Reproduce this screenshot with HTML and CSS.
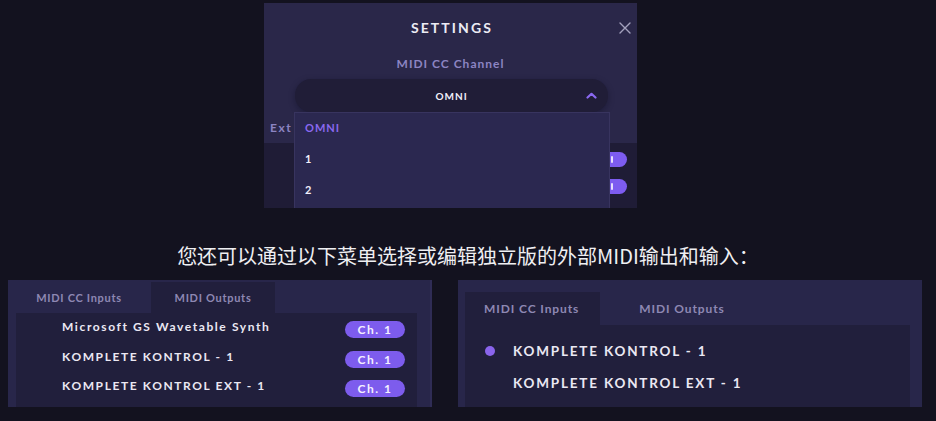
FILE: index.html
```html
<!DOCTYPE html>
<html lang="zh-CN">
<head>
<meta charset="utf-8">
<title>Settings</title>
<link rel="stylesheet" href="styles.css">
</head>
<body>
<div class="top">
  <section class="settings">
    <header class="settings-head">
      <h1 class="settings-title">SETTINGS</h1>
      <button class="close" aria-label="Close">
        <svg width="12" height="12" viewBox="0 0 12 12"><path d="M1 1 L11 11 M11 1 L1 11" stroke="#a4a1bd" stroke-width="1.4" stroke-linecap="round" fill="none"/></svg>
      </button>
    </header>
    <div class="field-label">MIDI CC Channel</div>
    <div class="select-wrap">
      <div class="select">
        <span class="select-value">OMNI</span>
        <svg class="chevron" width="11" height="7" viewBox="0 0 11 7"><path d="M1.5 5.5 L5.5 1.8 L9.5 5.5" stroke="#8a68f0" stroke-width="2.2" stroke-linecap="round" stroke-linejoin="round" fill="none"/></svg>
      </div>
      <ul class="menu">
        <li class="menu-item active">OMNI</li>
        <li class="menu-item">1</li>
        <li class="menu-item">2</li>
      </ul>
    </div>
    <div class="ext-label"><span class="ext-clip">Ext</span></div>
    <div class="ext-section">
      <div class="toggle-row"><span class="toggle"></span></div>
      <div class="toggle-row"><span class="toggle"></span></div>
    </div>
  </section>
</div>

<p class="caption">您还可以通过以下菜单选择或编辑独立版的外部MIDI输出和输入：</p>

<div class="panels">
  <section class="panel panel-out">
    <nav class="tabs">
      <span class="tab">MIDI CC Inputs</span>
      <span class="tab active">MIDI Outputs</span>
    </nav>
    <div class="list">
      <div class="row"><span class="name">Microsoft GS Wavetable Synth</span><span class="ch">Ch. 1</span></div>
      <div class="row"><span class="name">KOMPLETE KONTROL - 1</span><span class="ch">Ch. 1</span></div>
      <div class="row"><span class="name">KOMPLETE KONTROL EXT - 1</span><span class="ch">Ch. 1</span></div>
    </div>
  </section>
  <section class="panel panel-in">
    <nav class="tabs">
      <span class="tab active">MIDI CC Inputs</span>
      <span class="tab">MIDI Outputs</span>
    </nav>
    <div class="list">
      <div class="row"><span class="dot"></span><span class="name">KOMPLETE KONTROL - 1</span></div>
      <div class="row"><span class="dot off"></span><span class="name">KOMPLETE KONTROL EXT - 1</span></div>
    </div>
  </section>
</div>
</body>
</html>
```

FILE: styles.css
```css
* { box-sizing: border-box; }
html, body { margin: 0; padding: 0; }
body {
  width: 936px;
  height: 421px;
  overflow: hidden;
  background: #13121f;
  font-family: "Lato", "Noto Sans", sans-serif;
  color: #e9e6f3;
}

/* ---------- settings ---------- */
.top { padding: 3px 0 0 264px; }
.settings {
  width: 373px;
  height: 205px;
  background: #2a2749;
  overflow: hidden;
  display: flex;
  flex-direction: column;
}
.settings-head {
  position: relative;
  padding-top: 15px;
  height: 35px;
  text-align: center;
}
.settings-title {
  margin: 0;
  padding-left: 3px;
  font-size: 14px;
  line-height: 20px;
  font-weight: 700;
  letter-spacing: 2.1px;
  color: #ecebf4;
}
.close {
  position: absolute;
  right: 2px;
  top: 15px;
  width: 20px;
  height: 20px;
  padding: 0;
  border: 0;
  background: transparent;
  display: flex;
  align-items: center;
  justify-content: center;
}
.field-label {
  margin-top: 18px;
  line-height: 16px;
  font-size: 12px;
  font-weight: 700;
  letter-spacing: 1px;
  color: #8c84c2;
  text-align: center;
}
.select-wrap {
  position: relative;
  margin: 7px 29px 0 31px;
}
.select {
  height: 33px;
  border-radius: 16px;
  background: #201d37;
  box-shadow: 0 2px 6px rgba(10, 8, 25, 0.35);
  display: flex;
  align-items: center;
  justify-content: center;
  position: relative;
}
.select-value {
  font-size: 10px;
  font-weight: 700;
  letter-spacing: 1px;
  color: #f1effa;
}
.chevron {
  position: absolute;
  right: 11px;
  top: 13px;
}
.menu {
  position: absolute;
  z-index: 2;
  left: -1px;
  right: -2px;
  top: 33px;
  margin: 0;
  padding: 0;
  list-style: none;
  background: #2b2850;
  border: 1px solid #38345f;
  height: 110px;
}
.menu-item {
  height: 31px;
  line-height: 29px;
  padding-left: 10px;
  font-size: 11px;
  font-weight: 700;
  letter-spacing: 1px;
  color: #f1effa;
}
.menu-item.active { color: #8a68f0; }
.ext-label {
  margin-top: 8px;
  padding-left: 6px;
  line-height: 16px;
  height: 16px;
}
.ext-clip {
  display: block;
  width: 24px;
  overflow: hidden;
  font-size: 12px;
  font-weight: 700;
  letter-spacing: 1.6px;
  color: #8c84c2;
  white-space: nowrap;
}
.ext-section {
  flex: 1;
  margin-top: 7px;
  background: #1f1c36;
  padding: 9px 10px 0 0;
  display: flex;
  flex-direction: column;
  gap: 12px;
}
.toggle-row { display: flex; justify-content: flex-end; }
.toggle {
  width: 34px;
  height: 15px;
  border-radius: 8px;
  background: #7d5cf0;
  position: relative;
}
.toggle::after {
  content: "";
  position: absolute;
  left: 18px;
  top: 4px;
  width: 2px;
  height: 7px;
  border-radius: 1px;
  background: #e6defc;
}

/* ---------- caption ---------- */
.caption {
  margin: 36px 0 0;
  text-align: center;
  font-family: "Noto Sans CJK SC", "Noto Sans", sans-serif;
  font-size: 20px;
  line-height: 24px;
  color: #efeff2;
}

/* ---------- panels ---------- */
.panels {
  margin-top: 12px;
  padding-left: 8px;
  display: flex;
  gap: 26px;
}
.panel {
  height: 127px;
  background: #28264a;
  display: flex;
  flex-direction: column;
}
.panel-out {
  width: 424px;
  border-right: 2px solid #2f2c55;
  padding: 2px 13px 0 8px;
}
.panel-in {
  width: 464px;
  padding: 12px 12px 0 7px;
}
.tabs { display: flex; }
.tab {
  font-weight: 700;
  color: #8e88b3;
  text-align: center;
  white-space: nowrap;
}
.panel-out .tabs { gap: 10px; padding-left: 1px; }
.panel-out .tab {
  width: 124px;
  height: 31px;
  line-height: 31px;
  font-size: 11px;
  letter-spacing: 0.7px;
}
.panel-in .tabs { gap: 20px; }
.panel-in .tab {
  height: 33px;
  line-height: 33px;
  padding: 0 21px 0 19px;
  font-size: 12px;
  letter-spacing: 0.9px;
}
.tab.active { background: #211f3c; }
.list {
  flex: 1;
  background: #211f3c;
}
.row {
  display: flex;
  align-items: center;
}
.panel-out .list { padding-top: 2px; }
.panel-out .row {
  height: 29.5px;
  padding: 0 12px 0 46px;
  justify-content: space-between;
}
.panel-out .name {
  font-size: 12px;
  font-weight: 700;
  letter-spacing: 1.6px;
  margin-bottom: 6px;
  color: #ebe8f3;
}
.ch {
  width: 60px;
  height: 17px;
  border-radius: 9px;
  background: #7d5ced;
  color: #f3f0ff;
  font-size: 12px;
  font-weight: 700;
  letter-spacing: 1.5px;
  line-height: 17px;
  text-align: center;
}
.panel-in .list { padding-top: 10px; }
.panel-in .row {
  height: 32px;
  padding-left: 20px;
}
.dot {
  width: 10px;
  height: 10px;
  border-radius: 50%;
  background: #8a64ec;
  margin-right: 18px;
}
.dot.off { background: transparent; }
.panel-in .name {
  font-size: 13.5px;
  font-weight: 700;
  letter-spacing: 1.8px;
  color: #ebe8f3;
}
```
